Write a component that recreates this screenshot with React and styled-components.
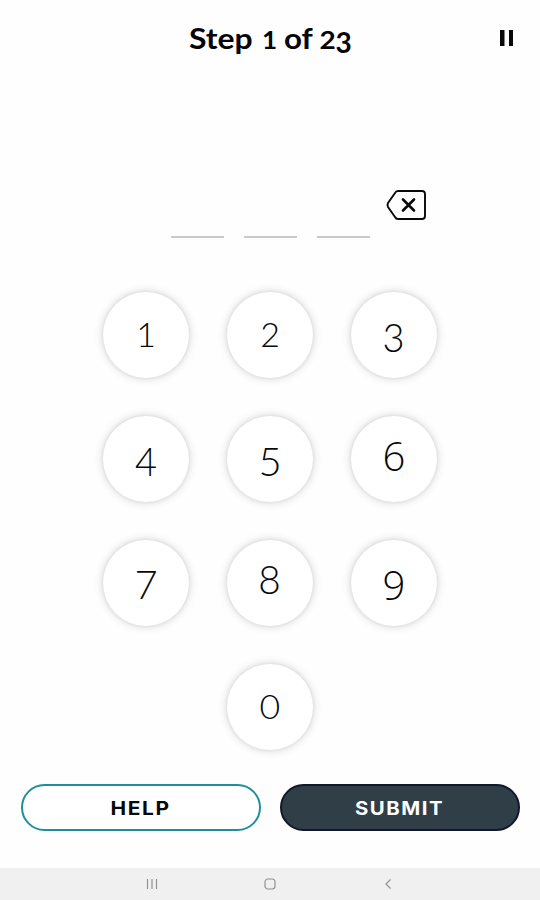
import React from "react";
import styled, { createGlobalStyle } from "styled-components";

const GlobalStyle = createGlobalStyle`
  * { box-sizing: border-box; }
  body { margin: 0; background: #fff; }
`;

const Screen = styled.main`
  display: flex;
  flex-direction: column;
  width: 540px;
  height: 900px;
  overflow: hidden;
  background: #fefefe;
  color: #050505;
  font-family: Lato, "Open Sans", sans-serif;
`;

const Header = styled.header`
  display: grid;
  grid-template-columns: 1fr auto 1fr;
  align-items: center;
  height: 76px;
  padding: 0 26px;
`;

const Title = styled.h1`
  grid-column: 2;
  display: flex;
  align-items: baseline;
  margin: 0;
  font-size: 28px;
  line-height: 34px;
  font-weight: 700;
  white-space: pre;
`;

const Word = styled.span`
  display: inline-block;
  width: ${({ $width }) => $width}px;
  transform-origin: 0 27px;
  transform: translateY(${({ $drop = 0 }) => $drop}px) scale(${({ $sx = 1 }) => $sx}, ${({ $sy = 1 }) => $sy});
`;

const IconButton = styled.button`
  display: flex;
  justify-self: end;
  padding: 0;
  border: 0;
  background: none;
  color: #080808;
`;

const Entry = styled.section`
  display: flex;
  align-items: flex-end;
  gap: 20px;
  height: 162px;
  padding-left: 171px;

  ${IconButton} {
    align-self: flex-end;
    margin: 0 0 17px -5px;
  }
`;

const Slot = styled.span`
  width: 53px;
  height: 2px;
  background: #c9c9c9;
`;

const Keypad = styled.section`
  display: grid;
  grid-template-columns: repeat(3, 86px);
  grid-auto-rows: 86px;
  gap: 38px;
  margin: 54px 0 0 103px;
`;

const Key = styled.button`
  display: flex;
  align-items: center;
  justify-content: center;
  grid-column: ${({ $column }) => $column};
  padding: 0;
  border: 0;
  border-radius: 50%;
  background: #fff;
  color: #080808;
  box-shadow: 0 0 3px 1px #dedede, 0 0 7px 3px #ebebeb;
`;

const Digit = styled.span`
  font-family: ${({ $face }) => $face}, sans-serif;
  font-size: ${({ $size }) => $size}px;
  line-height: 48px;
  font-weight: 300;
  transform: translate(${({ $x = 0 }) => $x}px, ${({ $y }) => $y}px) scaleX(${({ $sx = 1 }) => $sx});
`;

const Actions = styled.section`
  display: grid;
  grid-template-columns: 240px 240px;
  gap: 19px;
  margin: 34px 0 0 21px;
`;

const Action = styled.button`
  display: flex;
  align-items: center;
  justify-content: center;
  height: 47px;
  padding: 0;
  border: 2px solid ${({ $primary }) => ($primary ? "#11182b" : "#208f9b")};
  border-radius: 24px;
  background: ${({ $primary }) => ($primary ? "#2f3e47" : "#fff")};
  color: ${({ $primary }) => ($primary ? "#fff" : "#080808")};
  font: 700 18.5px/24px Inter, sans-serif;
  letter-spacing: 1.4px;
`;

const ActionLabel = styled.span`
  transform: scaleX(${({ $stretch }) => $stretch});
`;

const Navigation = styled.nav`
  display: grid;
  grid-template-columns: repeat(3, 118px);
  justify-content: center;
  align-items: center;
  height: 32px;
  margin-top: auto;
  background: #f0f0f0;
  color: #929292;
`;

const NavItem = styled.span`
  display: flex;
  justify-content: center;
`;

const keys = [
  { value: 1, face: "Lato", size: 34, y: -1 },
  { value: 2, face: "Lato", size: 34, y: -1 },
  { value: 3, face: "Lato", size: 40, y: 2, sx: 0.95 },
  { value: 4, face: "Lato", size: 40, y: 2, sx: 0.95, x: 0.5 },
  { value: 5, face: "Lato", size: 40, y: 2 },
  { value: 6, face: "Open Sans", size: 40, y: -3 },
  { value: 7, face: "Lato", size: 40, y: 1 },
  { value: 8, face: "Lato", size: 40, y: -4, sx: 0.97 },
  { value: 9, face: "Open Sans", size: 40, y: 2 },
  { value: 0, face: "Lato", size: 34, y: -1, sx: 1.05, column: 2 },
];

export default function App() {
  return (
    <>
      <GlobalStyle />
      <Screen>
        <Header>
          <Title>
            <Word $width={73} $sx={1.14}>Step</Word>
            <Word $width={22} $sx={0.93} $sy={0.88}>1</Word>
            <Word $width={36} $sx={1.12}>of</Word>
            <Word $width={16} $sy={0.88}>2</Word>
            <Word $width={16} $drop={4}>3</Word>
          </Title>
          <IconButton aria-label="Pause">
            <svg width="14" height="18" viewBox="0 0 14 18" fill="currentColor">
              <path d="M0 1h4.500v16H0zM9 1h4v16H9z" />
            </svg>
          </IconButton>
        </Header>
        <Entry>
          <Slot /><Slot /><Slot />
          <IconButton aria-label="Delete">
            <svg width="42" height="32" viewBox="0 0 42 32" fill="none" stroke="currentColor" strokeWidth="1.9" strokeLinejoin="round" strokeLinecap="round">
              <path d="M13 2H37Q40 2 40 5V27Q40 30 37 30H13Q11 30 10 28L3 18Q2 16 3 14L10 4Q11 2 13 2Z" />
              <path strokeWidth="2.6" d="M18 10.500L29 21.500M29 10.500L18 21.500" />
            </svg>
          </IconButton>
        </Entry>
        <Keypad>
          {keys.map(({ value, face, size, x, y, sx, column = "auto" }) => (
            <Key key={value} $column={column}>
              <Digit $face={face} $size={size} $x={x} $y={y} $sx={sx}>{value}</Digit>
            </Key>
          ))}
        </Keypad>
        <Actions>
          <Action><ActionLabel $stretch={1.13}>HELP</ActionLabel></Action>
          <Action $primary><ActionLabel $stretch={1.1}>SUBMIT</ActionLabel></Action>
        </Actions>
        <Navigation>
          <NavItem>
            <svg width="12" height="12" viewBox="0 0 12 12" stroke="currentColor" strokeWidth="1.2"><path d="M1.5 1v10M6 1v10M10.5 1v10" /></svg>
          </NavItem>
          <NavItem>
            <svg width="12" height="12" viewBox="0 0 12 12" fill="none" stroke="currentColor" strokeWidth="1.2"><rect x="1" y="1" width="10" height="10" rx="3" /></svg>
          </NavItem>
          <NavItem>
            <svg width="12" height="12" viewBox="0 0 12 12" fill="none" stroke="currentColor" strokeWidth="1.2"><path d="M8.5 1.5L4 6l4.500 4.500" /></svg>
          </NavItem>
        </Navigation>
      </Screen>
    </>
  );
}
